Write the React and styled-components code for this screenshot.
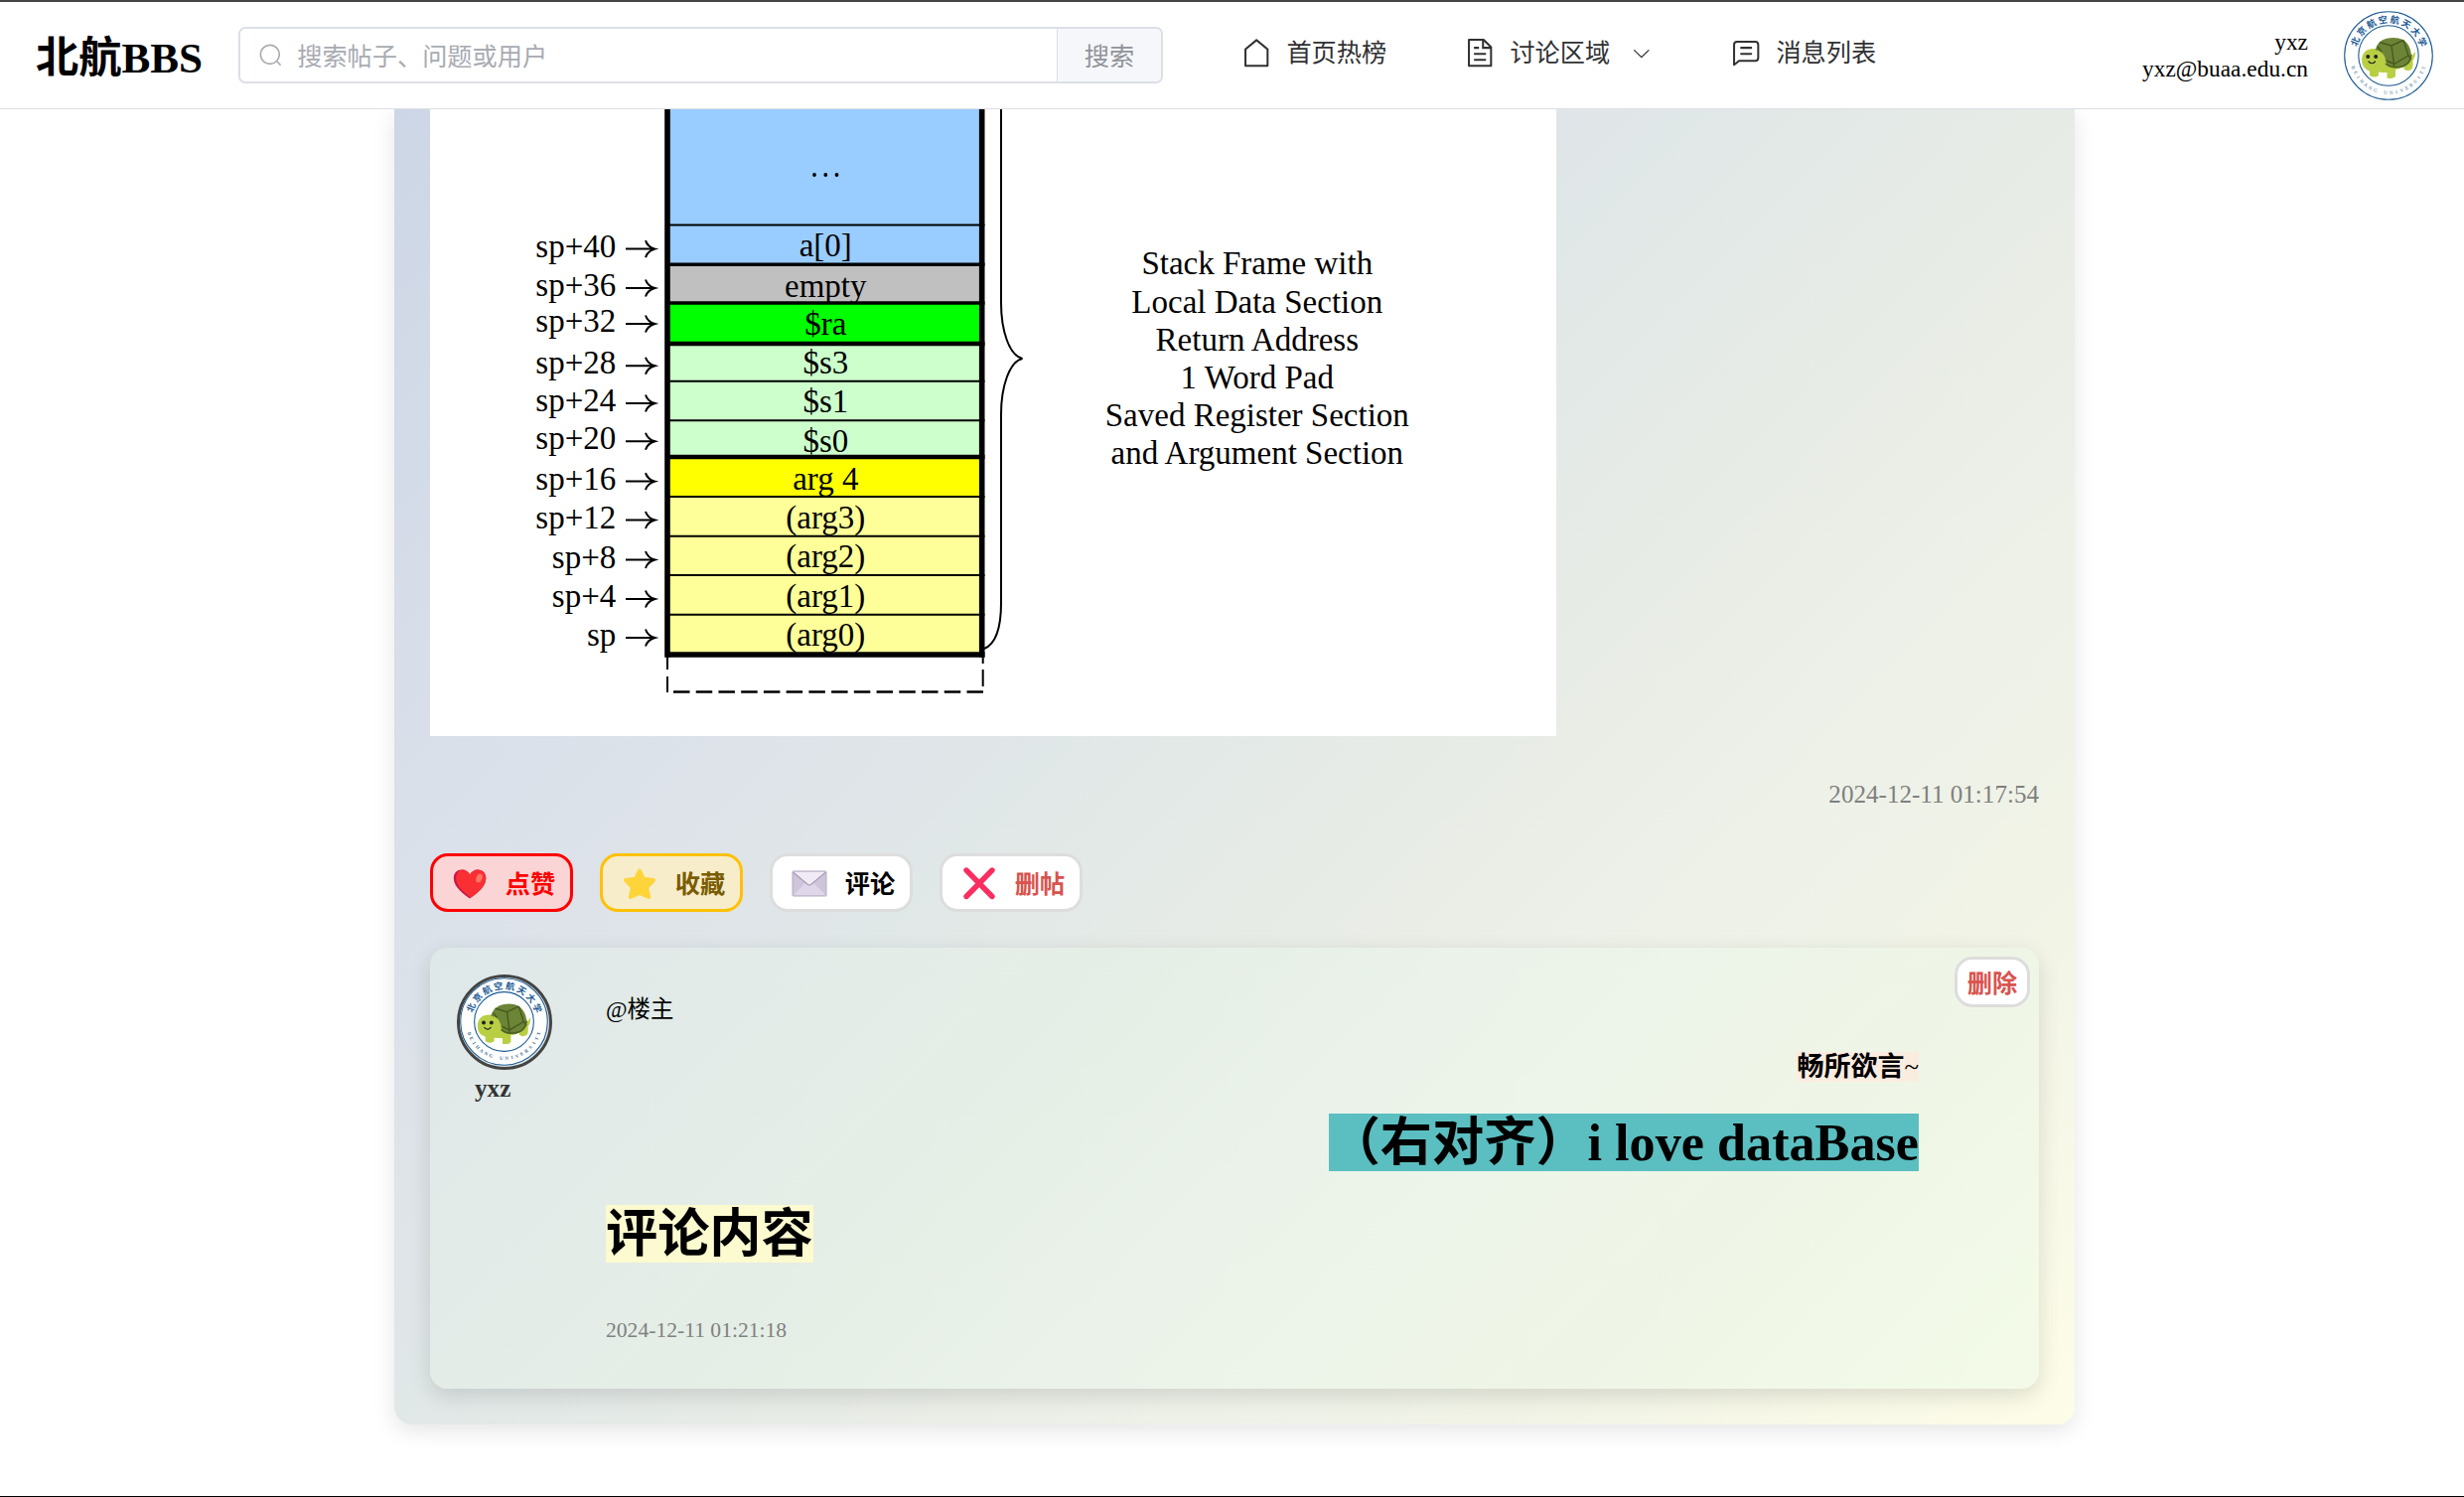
import React from "react";
import styled, { createGlobalStyle } from "styled-components";

const SERIF = '"Liberation Serif", "Noto Sans CJK SC", serif';
const SANS = '"Noto Sans CJK SC", sans-serif';

const Global = createGlobalStyle`
  *, *::before, *::after { box-sizing: border-box; }
  body { margin: 0; background: #fff; font-family: ${SERIF}; color: #000; overflow: hidden; }
  p, h1, h2 { margin: 0; }
  button { font-family: inherit; padding: 0; }
`;

const Page = styled.div`
  height: 1507px;
  display: flex;
  flex-direction: column;
  border-bottom: 1px solid #000;
  overflow: hidden;
`;

/* ---------- header ---------- */
const Header = styled.header`
  flex: none;
  height: 110px;
  display: flex;
  align-items: center;
  padding: 0 31px 0 36px;
  background: #fff;
  border-top: 2px solid #444;
  border-bottom: 1px solid #dcdfe6;
  position: relative;
  z-index: 1;
`;

const Brand = styled.div`
  width: 204px;
  padding-top: 6px;
  font-size: 43.2px;
  line-height: 52px;
  font-weight: bold;
  white-space: nowrap;
`;

const SearchBox = styled.div`
  width: 931px;
  height: 57px;
  display: flex;
  border: 2px solid #dcdfe6;
  border-radius: 7px;
  overflow: hidden;
  font-family: ${SANS};
  font-size: 25.2px;
  line-height: 36px;
`;

const SearchField = styled.div`
  flex: 1;
  display: flex;
  align-items: center;
  gap: 14px;
  padding-left: 18px;
  color: #a8abb2;
`;

const Placeholder = styled.span`
  padding-bottom: 2px;
`;

const SearchButton = styled.button`
  width: 105px;
  padding-bottom: 2px;
  border: 0;
  border-left: 1px solid #dcdfe6;
  background: #f5f7fa;
  color: #909399;
  font: inherit;
`;

const Nav = styled.nav`
  display: flex;
  margin-left: 78px;
  padding-bottom: 5px;
`;

const NavItem = styled.a`
  width: ${(p) => p.$width}px;
  display: flex;
  align-items: center;
  gap: 14px;
  color: #303133;
  font-family: ${SANS};
  font-size: 25.2px;
  line-height: 32px;
  white-space: nowrap;
`;

const NavLabel = styled.span`
  padding-bottom: 4px;
`;

const Caret = styled.span`
  display: flex;
  margin-left: 7px;
  padding-top: 2px;
`;

const Glyph = styled.svg`
  width: ${(p) => p.$size}px;
  height: ${(p) => p.$size}px;
  fill: currentColor;
  flex: none;
`;

const User = styled.div`
  margin-left: auto;
  margin-right: 36px;
  text-align: right;
  font-size: 23.4px;
  line-height: 27px;
`;

/* ---------- post ---------- */
const Post = styled.main`
  flex: none;
  width: 1692px;
  height: 1324px;
  margin-left: 397px;
  padding: 0 36px;
  border-radius: 0 0 18px 18px;
  background: linear-gradient(135deg, #cdd6e6 0%, #dae0ea 24%, #dfe5e8 39%, #e1e8e7 45%, #e8ece6 58%, #edf1e8 70%, #f1f3e6 81%, #fdfde8 100%);
  box-shadow: 0 7px 22px rgba(0, 0, 0, 0.1);
`;

const Figure = styled.svg`
  display: block;
  width: 1134px;
  height: 631px;
  background: #fff;
  font-family: "Liberation Serif", serif;
  font-size: 33px;
`;

const PostDate = styled.p`
  margin-top: 43px;
  text-align: right;
  font-size: 25.1px;
  line-height: 32px;
  color: #808080;
`;

const Actions = styled.div`
  display: flex;
  gap: 27px;
  margin-top: 43px;
`;

const tones = {
  like: { edge: "#ff0000", fill: "#fbd5d5", ink: "#ff0000" },
  star: { edge: "#ffc107", fill: "#f8edcb", ink: "#7a5c00" },
  plain: { edge: "#dddddd", fill: "#ffffff", ink: "#000000" },
  danger: { edge: "#dddddd", fill: "#ffffff", ink: "#d9534f" },
};

const Pill = styled.button`
  width: ${(p) => (p.$small ? 76 : 144)}px;
  height: ${(p) => (p.$small ? 51 : 59)}px;
  display: flex;
  align-items: center;
  justify-content: center;
  gap: 18px;
  padding: 0 0 2px ${(p) => (p.$small ? 0 : 4)}px;
  border: 3px solid ${(p) => tones[p.$tone].edge};
  border-radius: 18px;
  background: ${(p) => tones[p.$tone].fill};
  color: ${(p) => tones[p.$tone].ink};
  font-family: ${SANS};
  font-size: 25.2px;
  font-weight: bold;
  line-height: 36px;
  white-space: nowrap;
`;

const Emoji = styled.svg`
  width: 36px;
  height: 36px;
  flex: none;
  margin-top: 5px;
`;

/* ---------- comment ---------- */
const Comment = styled.section`
  display: flex;
  height: 444px;
  margin-top: 36px;
  padding: 9px 9px 0 27px;
  border-radius: 18px;
  background: linear-gradient(135deg, #dfe8e9 0%, #e5eee6 33%, #ecf4ea 58%, #eff5e6 76%, #f3fbe8 100%);
  box-shadow: 0 7px 22px rgba(0, 0, 0, 0.13);
`;

const Author = styled.div`
  width: 150px;
  padding-top: 18px;
  font-size: 25.2px;
  font-weight: bold;
  line-height: 32px;
  color: #333;
`;

const AuthorRing = styled.div`
  width: 96px;
  height: 96px;
  border: 3.6px solid #444;
  border-radius: 50%;
  overflow: hidden;
`;

const AuthorName = styled.div`
  padding: 3px 0 0 18px;
`;

const Body = styled.div`
  width: 1322px;
  margin-right: 36px;
  padding-top: 39px;
`;

const Mention = styled.p`
  font-size: 23.4px;
  line-height: 28px;
`;

const RichLine = styled.p`
  margin-top: ${(p) => p.$gap}px;
  text-align: ${(p) => p.$align || "left"};
  font-size: ${(p) => p.$size}px;
  line-height: ${(p) => p.$line}px;
  font-weight: bold;
`;

const Mark = styled.span`
  background: ${(p) => p.$color};
  font-weight: ${(p) => (p.$plain ? "normal" : "bold")};
`;

const CommentDate = styled.p`
  margin-top: 54px;
  font-size: 21.6px;
  line-height: 26px;
  color: #808080;
`;

/* ---------- seal avatar ---------- */
const SealArt = styled.svg`
  display: block;
  width: ${(p) => p.$size}px;
  height: ${(p) => p.$size}px;
  flex: none;
`;

function Seal({ size }) {
  const top = [..."北京航空航天大学"];
  const bottom = [..."BEIHANG UNIVERSITY"];
  return (
    <SealArt $size={size} viewBox="0 0 90 90">
      <circle cx="45" cy="45" r="44.3" fill="#fff" stroke="#1b5a94" strokeWidth="1.1" />
      <circle cx="45" cy="45" r="30.2" fill="none" stroke="#1b5a94" strokeWidth="1.1" />
      <g fontFamily='"Noto Sans CJK SC", sans-serif' fontSize="9.2" fontWeight="bold" fill="#1b5a94" textAnchor="middle">
        {top.map((c, i) => (
          <text key={i} x="45" y="11.8" transform={`rotate(${-67 + i * 19.3} 45 45)`}>{c}</text>
        ))}
      </g>
      <g fontFamily='"Liberation Serif", serif' fontSize="5" fill="#3d7190" textAnchor="middle">
        {bottom.map((c, i) => (
          <text key={i} x="45" y="84" transform={`rotate(${71 - i * 8.35} 45 45)`}>{c}</text>
        ))}
      </g>
      <path d="M66 47Q70 45 71.6 41Q73 44 69.5 50Q70 55 68.5 58.5Q64 61.5 60.5 58.5V56Q56 58.5 52 59V66Q49 69 43.5 67.5V62Q38 62 35 61.5V65Q31 68 26 65V60.5Q18 58 18 49Q19 38 30 38Q37 38 41 45Q45 53 52 53Z" fill="#b9cf43" />
      <path d="M31.5 39.5Q34 30 43 27.8Q52 25.5 60 29Q67 34 68 44Q69 52 62 55.5Q54 59 46 56Q42 54 41.5 47Q38 39 31.5 39.5Z" fill="#6c8435" />
      <path d="M36 31.5L48 35L60 29.5M48 35L50.5 53.5M34 36L38 41M60 29.5L65 45L50.5 53.5L43 50M65 45L68 49M50.5 53.5V57" fill="none" stroke="#47591f" strokeWidth="1.4" />
      <path d="M42 53Q48 59 60 55.5Q67 52.5 68 44" fill="none" stroke="#4f6225" strokeWidth="1.6" />
      <circle cx="24.3" cy="46" r="2" fill="#222" />
      <circle cx="32.2" cy="46" r="2" fill="#222" />
      <path d="M25 51Q28.3 54.5 31.5 51" fill="none" stroke="#222" strokeWidth="1.2" strokeLinecap="round" />
    </SealArt>
  );
}

/* ---------- icons ---------- */
const icons = {
  search: ["m795.904 750.72 124.992 124.928a32 32 0 0 1-45.248 45.248L750.656 795.904a416 416 0 1 1 45.248-45.248zM480 832a352 352 0 1 0 0-704 352 352 0 0 0 0 704"],
  house: ["M192 413.952V896h640V413.952L512 147.328zM139.52 374.4l352-293.312a32 32 0 0 1 40.96 0l352 293.312A32 32 0 0 1 896 398.976V928a32 32 0 0 1-32 32H160a32 32 0 0 1-32-32V398.976a32 32 0 0 1 11.52-24.576"],
  document: ["M832 384H576V128H192v768h640zm-26.496-64L640 154.496V320zM160 64h480l256 256v608a32 32 0 0 1-32 32H160a32 32 0 0 1-32-32V96a32 32 0 0 1 32-32m160 448h384v64H320zm0-192h160v64H320zm0 384h384v64H320z"],
  chat: [
    "M160 826.88 273.536 736H800a64 64 0 0 0 64-64V256a64 64 0 0 0-64-64H224a64 64 0 0 0-64 64zM296 800 147.968 918.4A32 32 0 0 1 96 893.44V256a128 128 0 0 1 128-128h576a128 128 0 0 1 128 128v416a128 128 0 0 1-128 128z",
    "M352 512h320q32 0 32 32t-32 32H352q-32 0-32-32t32-32m0-192h320q32 0 32 32t-32 32H352q-32 0-32-32t32-32",
  ],
  down: ["M831.872 340.864 512 652.672 192.128 340.864a30.592 30.592 0 0 0-42.752 0 29.12 29.12 0 0 0 0 41.6L489.664 714.24a32 32 0 0 0 44.672 0l340.288-331.712a29.12 29.12 0 0 0 0-41.728 30.592 30.592 0 0 0-42.752 0z"],
};

function Icon({ name, size = 32.4 }) {
  return (
    <Glyph $size={size} viewBox="0 0 1024 1024">
      {icons[name].map((d) => <path key={d} d={d} />)}
    </Glyph>
  );
}

const Heart = () => (
  <Emoji viewBox="0 0 36 36">
    <path d="M18 32.5C13 29 2 21.5 1.8 12.5C1.7 6.5 5.5 3.5 9.8 3.5C13.5 3.5 16.5 5.5 18 8.5C19.5 5.5 22.5 3.5 26.2 3.5C31 3.5 34.4 7 34.3 12.5C34.2 21.5 23 29 18 32.5Z" fill="#c9184a" />
    <path d="M19 31.5C14 27.5 4.5 21 4.2 12.5C4.1 7.5 7 3.7 10.5 3.6C14.5 3.6 16.7 6 18.2 8.5C19.7 5.5 22.5 3.5 26.2 3.5C31 3.5 34.4 7 34.3 12.5C34.2 21 24 28 19 31.5Z" fill="#f92f33" />
    <ellipse cx="27.5" cy="12" rx="3" ry="4.6" fill="#ff7466" transform="rotate(22 27.5 12)" />
  </Emoji>
);

const Star = () => (
  <Emoji viewBox="0 0 36 36">
    <path d="M18 4.5L22 12.8L32 14L25 21.3L27.2 31L18 27L8.8 31L11 21.3L4 14L14 12.8Z" fill="#fdd53b" stroke="#fdd53b" strokeWidth="4" strokeLinejoin="round" />
  </Emoji>
);

const Envelope = () => (
  <Emoji viewBox="0 0 36 36">
    <rect x="1" y="5" width="34" height="25" rx="1" fill="#cfc5db" />
    <path d="M1.5 29.5L14 16.5H22L34.5 29.5Z" fill="#e0d6ea" />
    <path d="M1.5 5.5H34.5L19.5 18.5Q18 19.6 16.5 18.5Z" fill="#f1ebf6" />
    <path d="M1.5 6L16.5 18.5Q18 19.6 19.5 18.5L34.5 6" fill="none" stroke="#a79db5" strokeWidth="1.1" />
    <rect x="1" y="5" width="34" height="25" rx="1" fill="none" stroke="#b3a9c0" strokeWidth="1" />
  </Emoji>
);

const Cross = () => (
  <Emoji viewBox="0 0 36 36">
    <path d="M5 4L31 30.5M31 4L5 30.5" fill="none" stroke="#fa2e5f" strokeWidth="5.4" strokeLinecap="round" />
  </Emoji>
);

/* ---------- stack frame figure ---------- */
const rows = [
  { top: -10, bottom: 116.5, fill: "#99ccff", line: 2 },
  { top: 116.5, bottom: 156.2, fill: "#99ccff", text: "a[0]", base: 148.3, line: 3.4 },
  { top: 156.2, bottom: 195, fill: "#c0c0c0", text: "empty", base: 188.6, line: 3.6 },
  { top: 195, bottom: 236, fill: "#00ff00", text: "$ra", base: 227.2, line: 4.6 },
  { top: 236, bottom: 273.7, fill: "#ccffcc", text: "$s3", base: 266.3, line: 2 },
  { top: 273.7, bottom: 313.3, fill: "#ccffcc", text: "$s1", base: 305.4, line: 2 },
  { top: 313.3, bottom: 350, fill: "#ccffcc", text: "$s0", base: 344.6, line: 4.4 },
  { top: 350, bottom: 390, fill: "#ffff00", text: "arg 4", base: 382.8, line: 2 },
  { top: 390, bottom: 429.7, fill: "#ffff99", text: "(arg3)", base: 422, line: 2 },
  { top: 429.7, bottom: 469, fill: "#ffff99", text: "(arg2)", base: 461.3, line: 2 },
  { top: 469, bottom: 508.7, fill: "#ffff99", text: "(arg1)", base: 500.7, line: 2 },
  { top: 508.7, bottom: 549, fill: "#ffff99", text: "(arg0)", base: 540, line: 5.6 },
];

const labels = [
  ["sp+40", 148.6], ["sp+36", 188], ["sp+32", 224], ["sp+28", 266.3], ["sp+24", 304], ["sp+20", 342.2],
  ["sp+16", 382.6], ["sp+12", 421.5], ["sp+8", 461.5], ["sp+4", 501], ["sp", 540],
];

const notes = [
  "Stack Frame with", "Local Data Section", "Return Address",
  "1 Word Pad", "Saved Register Section", "and Argument Section",
];

function StackFigure() {
  return (
    <Figure viewBox="0 0 1134 631">
      {rows.map((r) => (
        <rect key={r.bottom} x="239" y={r.top} width="317" height={r.bottom - r.top} fill={r.fill} />
      ))}
      {[387, 398.3, 409.5].map((x) => <circle key={x} cx={x} cy="66" r="1.9" />)}
      <g textAnchor="middle">
        {rows.filter((r) => r.text).map((r) => (
          <text key={r.text} x="398.3" y={r.base}>{r.text}</text>
        ))}
        {notes.map((n, i) => (
          <text key={n} x="832.8" y={166.3 + i * 38.2}>{n}</text>
        ))}
      </g>
      <g stroke="#000">
        {rows.map((r) => (
          <path key={r.bottom} d={`M237 ${r.bottom}H558.5`} strokeWidth={r.line} />
        ))}
        <path d="M239 -10V551.8M555.7 -10V551.8" strokeWidth="5.6" />
      </g>
      <g textAnchor="end">
        {labels.map(([t, y]) => <text key={t} x="187.3" y={y}>{t}</text>)}
      </g>
      <g fill="none" stroke="#000" strokeWidth="2">
        {labels.map(([t, y]) => (
          <path key={t} d={`M197 ${y - 8}H226M217 ${y - 16.5}Q219 ${y - 10} 226.5 ${y - 8}Q219 ${y - 6} 217 ${y + 0.5}`} />
        ))}
        <path d="M575 -4V195C575 222 583 248 596.5 251C583 254 575 280 575 307V497C575 520 570 538 558 543" />
        <path d="M239 552V564M239 571V587M556.7 552V558M556.7 564V581" />
        <path d="M245 586.5H557.5" strokeDasharray="16.5 6.23" strokeWidth="2.4" />
      </g>
    </Figure>
  );
}

export default function App() {
  return (
    <Page>
      <Global />
      <Header>
        <Brand>北航BBS</Brand>
        <SearchBox>
          <SearchField>
            <Icon name="search" size={25.2} />
            <Placeholder>搜索帖子、问题或用户</Placeholder>
          </SearchField>
          <SearchButton>搜索</SearchButton>
        </SearchBox>
        <Nav>
          <NavItem $width={225}><Icon name="house" /><NavLabel>首页热榜</NavLabel></NavItem>
          <NavItem $width={268}>
            <Icon name="document" />
            <NavLabel>讨论区域</NavLabel>
            <Caret><Icon name="down" size={21.6} /></Caret>
          </NavItem>
          <NavItem $width={150}><Icon name="chat" /><NavLabel>消息列表</NavLabel></NavItem>
        </Nav>
        <User>
          <div>yxz</div>
          <div>yxz@buaa.edu.cn</div>
        </User>
        <Seal size={90} />
      </Header>
      <Post>
        <StackFigure />
        <PostDate>2024-12-11 01:17:54</PostDate>
        <Actions>
          <Pill $tone="like"><Heart />点赞</Pill>
          <Pill $tone="star"><Star />收藏</Pill>
          <Pill $tone="plain"><Envelope />评论</Pill>
          <Pill $tone="danger"><Cross />删帖</Pill>
        </Actions>
        <Comment>
          <Author>
            <AuthorRing><Seal size={89} /></AuthorRing>
            <AuthorName>yxz</AuthorName>
          </Author>
          <Body>
            <Mention>@楼主</Mention>
            <RichLine $gap={28} $size={27} $line={32} $align="right">
              <Mark $color="#fbece0">畅所欲言</Mark><Mark $color="#fbece0" $plain>~</Mark>
            </RichLine>
            <RichLine as="h1" $gap={30} $size={52.2} $line={60} $align="right"><Mark $color="#5bbfc1">（右对齐）i love dataBase</Mark></RichLine>
            <RichLine as="h1" $gap={32} $size={52.2} $line={60}><Mark $color="#fcfacf">评论内容</Mark></RichLine>
            <CommentDate>2024-12-11 01:21:18</CommentDate>
          </Body>
          <Pill $tone="danger" $small>删除</Pill>
        </Comment>
      </Post>
    </Page>
  );
}
